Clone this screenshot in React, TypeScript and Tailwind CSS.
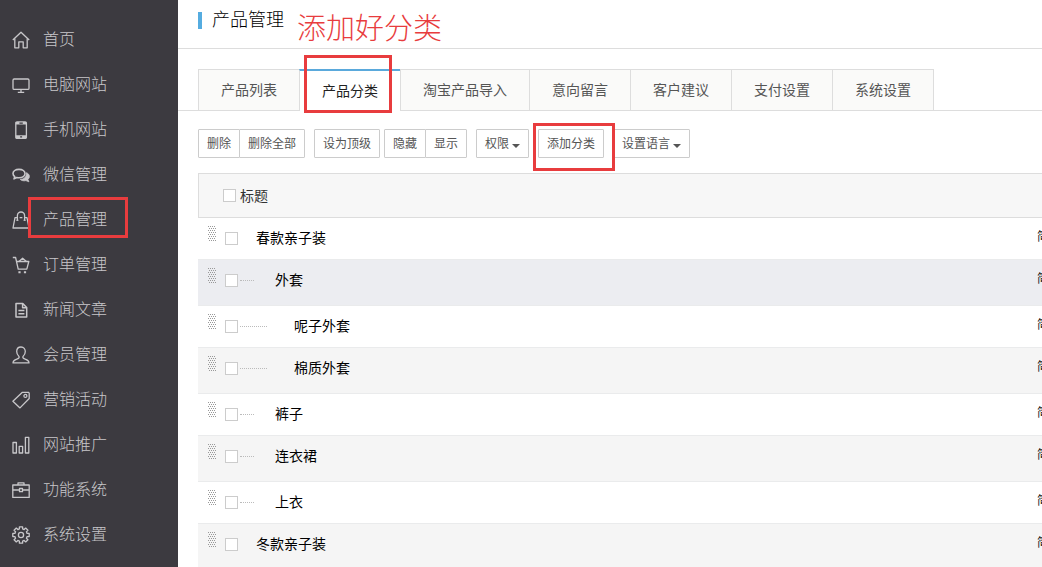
import type { ReactNode } from 'react';

interface NavItem {
  label: string;
  icon: ReactNode;
  marked?: boolean;
}

interface Category {
  name: string;
  level: 0 | 1 | 2;
  active?: boolean;
}

const navItems: NavItem[] = [
  {
    label: '首页',
    icon: (
      <>
        <path d="M.8 9 9 1.2 17.2 9" />
        <path d="M2.8 7.5v9.3h4v-6h4.4v6h4V7.5" />
      </>
    ),
  },
  {
    label: '电脑网站',
    icon: (
      <>
        <rect x="1" y="3" width="16" height="10.4" rx="1.2" />
        <path d="M9 13.4v3M5.8 16.4h6.4" />
      </>
    ),
  },
  {
    label: '手机网站',
    icon: (
      <>
        <rect x="3.8" y=".8" width="10.6" height="16.6" rx="1.2" />
        <path d="M3.8 2.2h10.6M3.8 15.6h10.6" strokeWidth="2.6" />
        <path d="M8.1 15.8h2M7.4 2.2h3.4" stroke="#3c3a40" />
      </>
    ),
  },
  {
    label: '微信管理',
    icon: (
      <>
        <path
          d="M7 3.4c3.6 0 6 1.900 6 4.200S10.600 11.800 7 11.800c-.8 0-1.500-.1-2.200-.3L2 12.900l.8-2.300C1.600 9.800 1 8.800 1 7.600c0-2.300 2.400-4.200 6-4.200z"
          strokeWidth="1.6"
        />
        <path
          d="M14.400 6.700c1.900.8 3 2.100 3 3.700 0 1.200-.6 2.200-1.500 3l1 2.400-3-1.200c-2 .5-4.400.1-5.700-1.200 3.800 0 6.400-2.500 6.200-6.700z"
          fill="currentColor"
          strokeWidth=".8"
        />
      </>
    ),
  },
  {
    label: '产品管理',
    marked: true,
    icon: (
      <>
        <path d="M5.400 6.700H3L1 17h16L15 6.700h-2.400M7.600 6.700h2.800" />
        <path d="M5.400 9.800V4.600a3.600 3.600 0 0 1 7.200 0v5.200" />
        <path d="M5.400 8.800v1M12.600 8.800v1" strokeWidth="2.200" />
      </>
    ),
  },
  {
    label: '订单管理',
    icon: (
      <>
        <path d="M.8 1.500h2.800l2.600 11.700h8.600l2-7.700H5" />
        <path d="m7 5.500 3.600-3.300 3.800 3.300" />
        <path d="M7.500 15.200v2M13 15.200v2" strokeWidth="2.200" />
      </>
    ),
  },
  {
    label: '新闻文章',
    icon: (
      <>
        <path d="M4 2.600h6.800l3.900 3.900v9.500H4z" strokeWidth="1.500" />
        <path d="M10.600 2.800v4h4M6.400 9.600h6M6.400 12.700h6" strokeWidth="1.500" />
      </>
    ),
  },
  {
    label: '会员管理',
    icon: (
      <path d="M9 1c-2.800 0-4.300 2-4.300 4.600 0 2.100.9 3.700 2.300 4.800.5 1.300-.2 2-1.600 2.500-2.600.9-4.400 1.300-4.400 4h16c0-2.700-1.800-3.100-4.400-4-1.400-.5-2.100-1.200-1.600-2.500 1.400-1.100 2.300-2.700 2.300-4.800C13.300 3 11.800 1 9 1z" />
    ),
  },
  {
    label: '营销活动',
    icon: (
      <>
        <path d="M10.400 1.300h6l.8.8v5.400L8 16.900.9 10.300z" />
        <circle cx="13.400" cy="4.900" r="1.500" />
      </>
    ),
  },
  {
    label: '网站推广',
    icon: (
      <>
        <rect x="1" y="6.500" width="3.400" height="10.500" />
        <rect x="7.200" y="10.300" width="3.400" height="6.700" />
        <rect x="13.400" y="1.300" width="3.400" height="15.700" />
      </>
    ),
  },
  {
    label: '功能系统',
    icon: (
      <>
        <rect x=".8" y="4" width="16.400" height="12.400" />
        <path d="M6 4V1.800h6V4M.8 9h6.600M10.600 9h6.600" />
        <rect x="7.500" y="7.500" width="3" height="3.200" />
      </>
    ),
  },
  {
    label: '系统设置',
    icon: (
      <>
        <path d="M15.100 7.400h2.100v3.200h-2.100l-.66 1.580 1.490 1.490-2.260 2.260-1.490-1.490-1.580.66v2.100H7.400v-2.100l-1.580-.66-1.490 1.490-2.260-2.260 1.490-1.490-.66-1.580H.8V7.400h2.100l.66-1.580-1.490-1.490 2.260-2.260 1.490 1.490L7.400 2.900V.8h3.200v2.100l1.580.66 1.490-1.490 2.260 2.260-1.490 1.490z" />
        <circle cx="9" cy="9" r="2.600" />
      </>
    ),
  },
];

const tabs = ['产品列表', '产品分类', '淘宝产品导入', '意向留言', '客户建议', '支付设置', '系统设置'];

const categories: Category[] = [
  { name: '春款亲子装', level: 0 },
  { name: '外套', level: 1, active: true },
  { name: '呢子外套', level: 2 },
  { name: '棉质外套', level: 2 },
  { name: '裤子', level: 1 },
  { name: '连衣裙', level: 1 },
  { name: '上衣', level: 1 },
  { name: '冬款亲子装', level: 0 },
];

const branchWidth = ['w-0', 'w-[14px]', 'w-[27px]'];
const nameIndent = ['pl-[16px]', 'pl-[21px]', 'pl-[27px]'];

function Highlight({ className }: { className: string }) {
  return <span aria-hidden="true" className={`pointer-events-none absolute z-10 border-3 border-[#e83c3e] ${className}`} />;
}

function Caret() {
  return (
    <svg width="8" height="4" viewBox="0 0 8 4" className="mt-1 ml-[3px]" aria-hidden="true">
      <path d="M0 0h8L4 4z" fill="#555" />
    </svg>
  );
}

function ToolButton({ children, joined }: { children: ReactNode; joined?: boolean }) {
  return (
    <button
      type="button"
      className={`flex h-[29px] items-center rounded-[1px] border border-[#ccc] bg-white px-2 text-xs whitespace-nowrap text-[#555] ${joined ? '-ml-px' : ''}`}
    >
      {children}
    </button>
  );
}

function Checkbox({ label }: { label: string }) {
  return (
    <input
      type="checkbox"
      aria-label={label}
      className="block h-[13px] w-[13px] shrink-0 appearance-none border border-[#ccc] bg-white checked:bg-[#55ace0]"
    />
  );
}

function DragHandle() {
  return (
    <svg width="8" height="15" viewBox="0 0 8 15" className="mt-2 self-start" fill="#999" aria-hidden="true">
      {[0, 2, 4, 6, 8, 10, 12, 14].map((y, row) =>
        [0, 2, 4, 6].map((x) => <rect key={`${x}-${y}`} x={x + (row % 2)} y={y} width="1" height="1" />),
      )}
    </svg>
  );
}

function Sidebar() {
  return (
    <nav className="w-[178px] shrink-0 bg-[#3c3a40] pt-[18px]">
      {navItems.map((item) => (
        <a key={item.label} href="#" className="relative flex h-[45px] items-center pb-px pl-3 text-base font-light text-[#c8c7ca]">
          <svg
            width="18"
            height="18"
            viewBox="0 0 18 18"
            className="mr-[13px] shrink-0"
            fill="none"
            stroke="currentColor"
            strokeWidth="1.3"
            strokeLinejoin="round"
            aria-hidden="true"
          >
            {item.icon}
          </svg>
          {item.label}
          {item.marked ? <Highlight className="-top-px left-7 h-[41px] w-[100px]" /> : null}
        </a>
      ))}
    </nav>
  );
}

function Tabs() {
  return (
    <div className="mt-5 flex h-[42px] border-b border-[#ddd] pl-5 text-sm">
      {tabs.map((tab, index) => {
        const active = tab === '产品分类';
        const last = index === tabs.length - 1;
        return (
          <a
            key={tab}
            href="#"
            className={`relative flex h-[42px] items-center border-l border-l-[#ddd] px-[22px] whitespace-nowrap ${
              active
                ? 'border-t-2 border-t-[#5aa9dc] bg-white pb-px text-[#222]'
                : 'border-y border-y-[#ddd] bg-[#fafaf9] text-[#555]'
            } ${last ? 'border-r border-r-[#ddd]' : ''}`}
          >
            {tab}
            {active ? <Highlight className="-top-4 left-1 h-[58px] w-[88px]" /> : null}
          </a>
        );
      })}
    </div>
  );
}

function Toolbar() {
  return (
    <div className="mt-[18px] flex gap-[9px] pl-5">
      <div className="flex">
        <ToolButton>删除</ToolButton>
        <ToolButton joined>删除全部</ToolButton>
      </div>
      <div className="flex gap-1">
        <ToolButton>设为顶级</ToolButton>
        <div className="flex">
          <ToolButton>隐藏</ToolButton>
          <ToolButton joined>显示</ToolButton>
        </div>
      </div>
      <ToolButton>
        权限
        <Caret />
      </ToolButton>
      <div className="relative">
        <ToolButton>添加分类</ToolButton>
        <Highlight className="-top-1.5 -left-[5px] h-12 w-[82px]" />
      </div>
      <ToolButton>
        设置语言
        <Caret />
      </ToolButton>
    </div>
  );
}

function CategoryTable() {
  return (
    <div className="mt-[15px] overflow-hidden pl-5">
      <table className="w-full min-w-[1000px] table-fixed border-separate border-spacing-0 text-left text-sm">
        <thead>
          <tr>
            <th className="h-[45px] w-[839px] border border-r-0 border-[#ddd] bg-[#f7f7f7] p-0 font-normal text-[#333]">
              <label className="flex items-center gap-1 pl-6">
                <Checkbox label="全选" />
                标题
              </label>
            </th>
            <th className="border-y border-[#ddd] bg-[#f7f7f7] p-0" />
          </tr>
        </thead>
        <tbody>
          {categories.map((category, index) => {
            const striped = index % 2 === 1;
            const background = category.active ? 'bg-[#ecedf1]' : 'bg-[#f5f5f5]';
            const cell = striped ? `border-y border-[#eaebec] ${background}` : 'bg-white';
            return (
              <tr key={category.name}>
                <td className={`px-0 pt-0 ${striped ? 'pb-1' : 'pb-0'} ${cell}`}>
                  <label className="flex h-[41px] items-center pl-2.5 text-black">
                    <DragHandle />
                    <span className="ml-[9px]">
                      <Checkbox label={category.name} />
                    </span>
                    <span
                      className={`ml-0.5 border-dotted border-[#bbb] ${category.level ? 'border-t' : ''} ${branchWidth[category.level]}`}
                    />
                    <span className={`pb-0.5 ${nameIndent[category.level]}`}>{category.name}</span>
                  </label>
                </td>
                <td className={`px-0 pt-0 text-xs whitespace-nowrap text-[#222] ${striped ? 'pb-2' : 'pb-1'} ${cell}`}>
                  简体中文
                </td>
              </tr>
            );
          })}
        </tbody>
      </table>
    </div>
  );
}

export default function App() {
  return (
    <div className="flex h-screen overflow-hidden bg-white font-['Liberation_Sans','Noto_Sans_CJK_SC',sans-serif]">
      <Sidebar />
      <main className="min-w-0 flex-1">
        <header className="flex h-[49px] items-center border-b border-[#ddd] pb-2 pl-5">
          <span className="h-[17px] w-1 bg-[#55ace0]" />
          <h1 className="ml-2.5 text-lg font-light text-black">产品管理</h1>
          <p className="mt-[18px] ml-[13px] font-['Liberation_Serif','Noto_Sans_CJK_SC',serif] text-[29px] leading-8 font-light whitespace-nowrap text-[#e83c3e]">
            添加好分类
          </p>
        </header>
        <Tabs />
        <Toolbar />
        <CategoryTable />
      </main>
    </div>
  );
}
